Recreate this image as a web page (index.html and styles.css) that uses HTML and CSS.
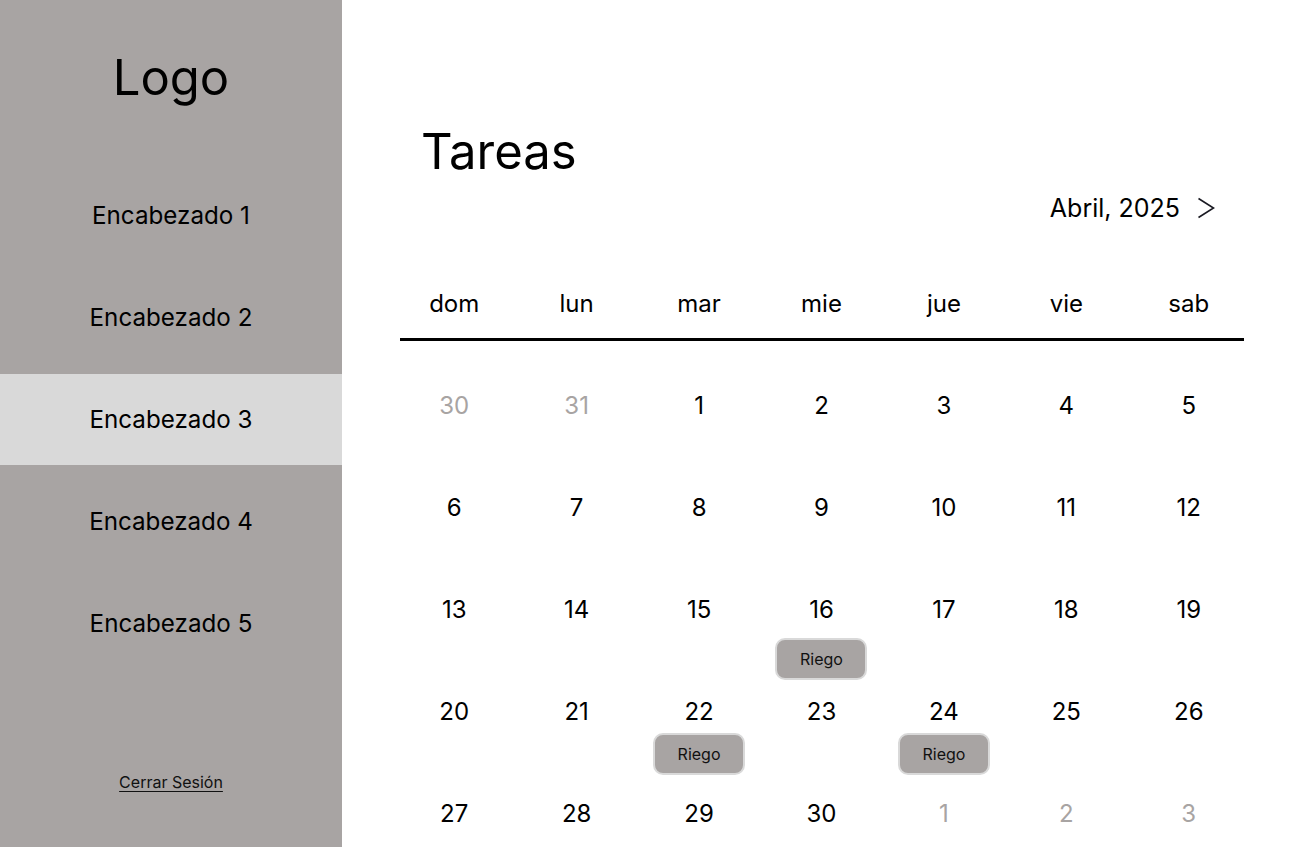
FILE: index.html
```html
<!DOCTYPE html>
<html lang="es">
<head>
  <meta charset="UTF-8" />
  <meta name="viewport" content="width=device-width, initial-scale=1.0"/>
  <title>Tareas</title>
  <link rel="stylesheet" href="styles.css">
</head>
<body>
  <aside class="sidebar">
    <div class="logo">Logo</div>
    <nav class="nav">
      <a class="nav-item">Encabezado 1</a>
      <a class="nav-item">Encabezado 2</a>
      <a class="nav-item active">Encabezado 3</a>
      <a class="nav-item">Encabezado 4</a>
      <a class="nav-item">Encabezado 5</a>
    </nav>
    <a class="logout">Cerrar Sesión</a>
  </aside>

  <main class="main">
    <h1 class="title">Tareas</h1>
    <div class="month">
      <span>Abril, 2025</span>
      <svg class="chevron" width="18" height="22" viewBox="0 0 18 22">
        <path d="M1.5 1.5 L16.5 11 L1.5 20.5" fill="none" stroke="#1a1a22" stroke-width="1.6"/>
      </svg>
    </div>

    <div class="calendar">
      <div class="week head">
        <div>dom</div><div>lun</div><div>mar</div><div>mie</div><div>jue</div><div>vie</div><div>sab</div>
      </div>
      <div class="rule"></div>

      <div class="week">
        <div class="day muted">30</div><div class="day muted">31</div><div class="day">1</div><div class="day">2</div><div class="day">3</div><div class="day">4</div><div class="day">5</div>
      </div>
      <div class="week">
        <div class="day">6</div><div class="day">7</div><div class="day">8</div><div class="day">9</div><div class="day">10</div><div class="day">11</div><div class="day">12</div>
      </div>
      <div class="week">
        <div class="day">13</div><div class="day">14</div><div class="day">15</div>
        <div class="day">16<span class="task low">Riego</span></div>
        <div class="day">17</div><div class="day">18</div><div class="day">19</div>
      </div>
      <div class="week">
        <div class="day">20</div><div class="day">21</div>
        <div class="day">22<span class="task">Riego</span></div>
        <div class="day">23</div>
        <div class="day">24<span class="task">Riego</span></div>
        <div class="day">25</div><div class="day">26</div>
      </div>
      <div class="week last">
        <div class="day">27</div><div class="day">28</div><div class="day">29</div><div class="day">30</div><div class="day muted">1</div><div class="day muted">2</div><div class="day muted">3</div>
      </div>
    </div>
  </main>
</body>
</html>
```

FILE: styles.css
```css
body {
  margin: 0;
  display: flex;
  height: 847px;
  overflow: hidden;
  background-color: #ffffff;
  color: #000;
  font-family: Inter, 'Noto Sans', sans-serif;
}

.sidebar {
  width: 342px;
  flex-shrink: 0;
  background-color: #a8a4a3;
  display: flex;
  flex-direction: column;
  align-items: center;
}

.logo {
  font-size: 49px;
  line-height: 58px;
  margin-top: 49px;
}

.nav {
  width: 100%;
  margin-top: 63px;
  display: flex;
  flex-direction: column;
  gap: 11px;
}

.nav-item {
  height: 91px;
  display: flex;
  align-items: center;
  justify-content: center;
  font-size: 24.2px;
  cursor: pointer;
}

.nav-item.active {
  background-color: #d9d9d9;
}

.logout {
  margin-top: 103px;
  font-size: 16px;
  line-height: 20px;
  text-decoration: underline;
  text-underline-offset: 3px;
  color: #111;
  cursor: pointer;
}

.main {
  flex: 1;
  padding: 0 58px;
  overflow: hidden;
}

.title {
  font-size: 49px;
  font-weight: 400;
  line-height: 58px;
  margin: 123px 0 0 21px;
}

.month {
  display: flex;
  justify-content: flex-end;
  align-items: center;
  gap: 17px;
  font-size: 25px;
  height: 36px;
  margin: 9px 29px 0 0;
}

.calendar {
  margin: 64px -6px 0 -7px;
}

.week {
  display: grid;
  grid-template-columns: repeat(7, 1fr);
  height: 102px;
}

.week.last {
  height: 33px;
}

.week.head {
  height: auto;
  font-size: 24px;
  line-height: 28px;
  text-align: center;
}

.rule {
  height: 3px;
  background-color: #000;
  margin: 20px 6px 51px 7px;
}

.day {
  display: flex;
  flex-direction: column;
  align-items: center;
  font-size: 24px;
  line-height: 28px;
}

.day.muted {
  color: #a8a4a3;
}

.task {
  margin-top: 7px;
  width: 88px;
  height: 38px;
  display: flex;
  align-items: center;
  justify-content: center;
  box-sizing: content-box;
  background-color: #a8a4a3;
  border: 2px solid #d9d9d9;
  border-radius: 10px;
  font-size: 16px;
  line-height: 20px;
  color: #111;
}

.task.low {
  margin-top: 14px;
}
```
